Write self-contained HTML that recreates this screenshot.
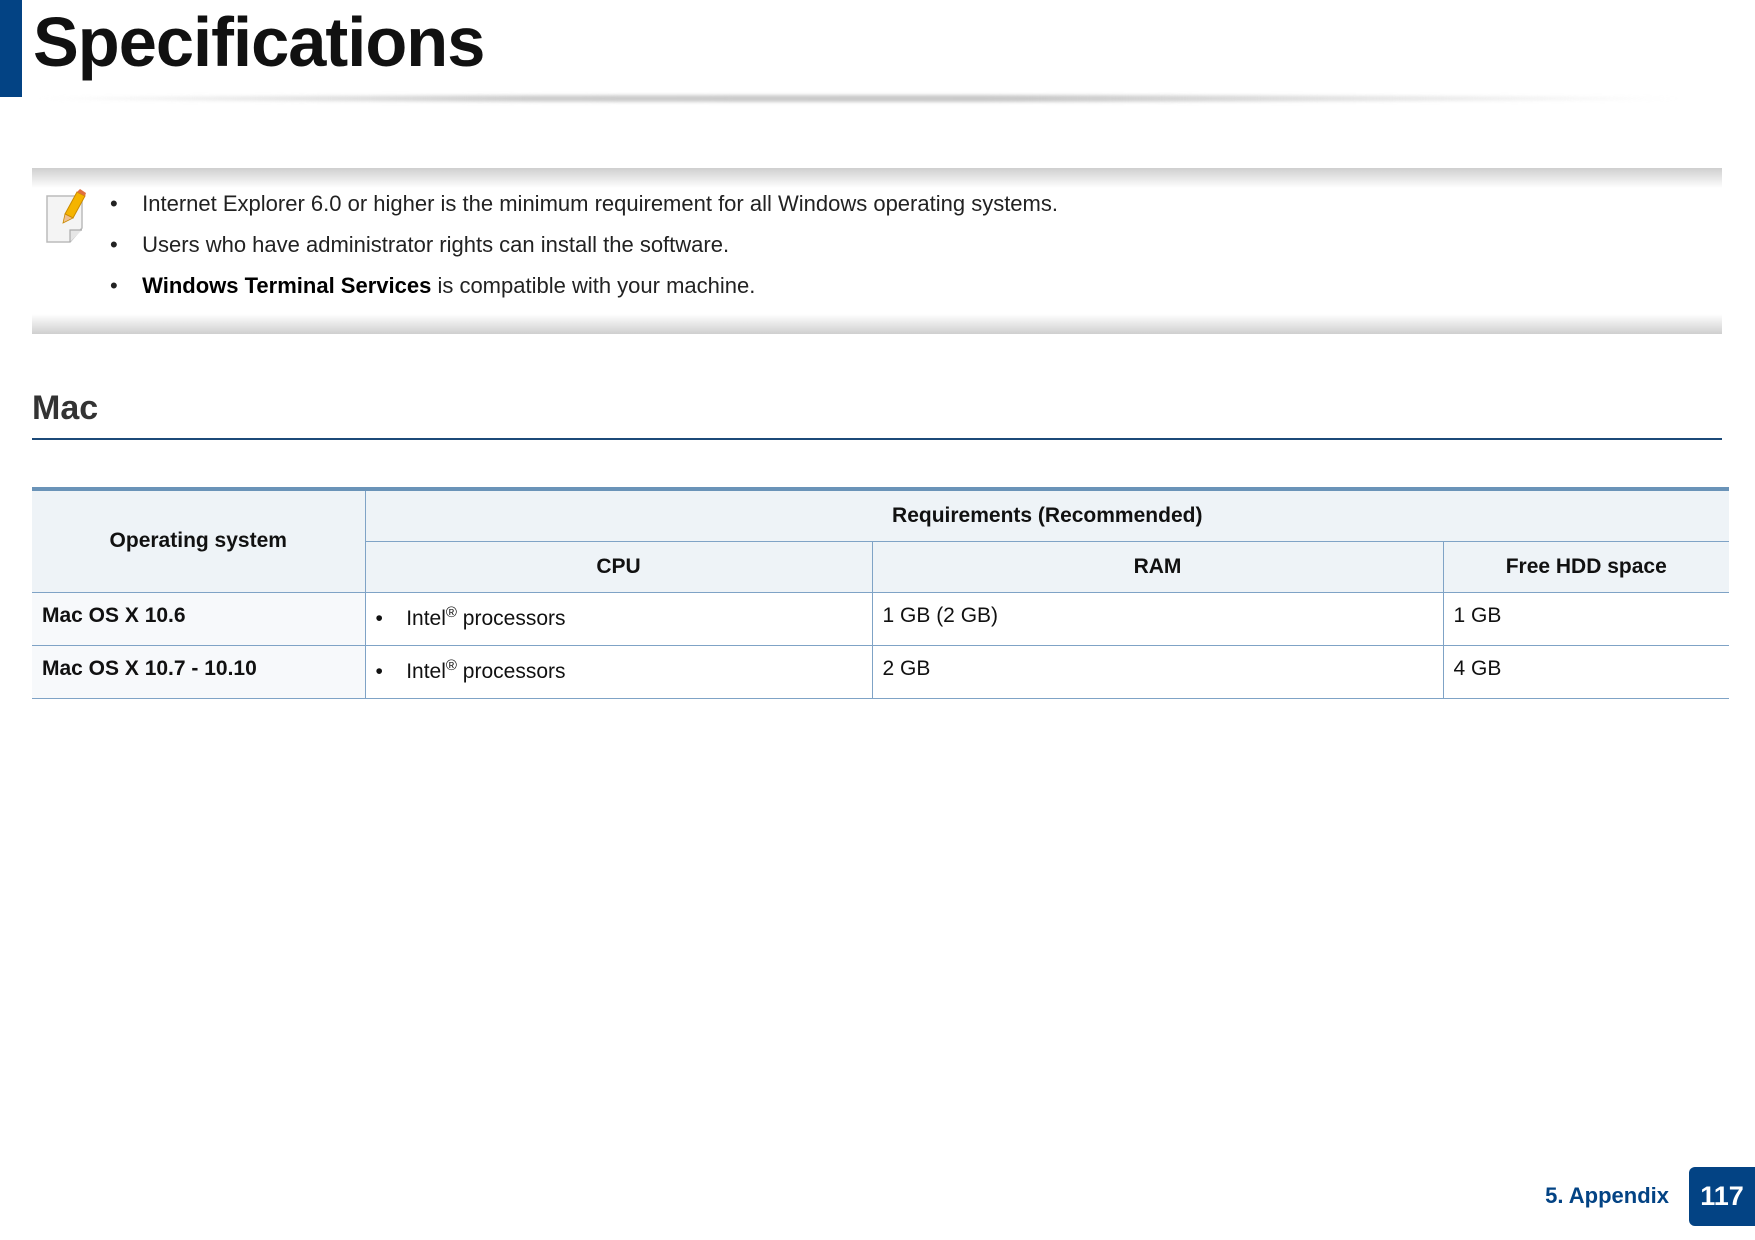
<!DOCTYPE html>
<html><head><meta charset="utf-8"><style>
*{margin:0;padding:0;box-sizing:border-box}
body{width:1755px;height:1240px;background:#fff;position:relative;overflow:hidden;font-family:"Liberation Sans",sans-serif;color:#111}
.a{position:absolute;white-space:nowrap}
.t{border-collapse:collapse;position:absolute;left:32px;top:487px;width:1697px;font-size:21px}
.t td{border:1px solid #7fa3c6;padding:0 10px}
.t tr:first-child td{border-top:4px solid #6a93b8}
.t td:first-child{border-left:none}
.t td:last-child{border-right:none}
.h{background:#eef3f7;font-weight:bold;text-align:center}
.b td{height:53px;vertical-align:top;padding-top:11px}
</style></head><body>
<div class="a" style="left:0;top:0;width:22px;height:97px;background:#034384"></div>
<div class="a" style="left:33px;top:2px;font-size:70px;font-weight:bold;letter-spacing:-1px;transform:scaleX(0.98);transform-origin:left">Specifications</div>
<div class="a" style="left:34px;top:95px;width:1650px;height:7px;background:linear-gradient(90deg,rgba(255,255,255,0),#ccc 30%,#c8c8c8 60%,rgba(255,255,255,0));filter:blur(1.5px);border-radius:50%"></div>

<div class="a" style="left:32px;top:168px;width:1690px;height:166px;background:linear-gradient(#cfcfcf,#fff 20px,#fff 146px,#cfcfcf)"></div>
<svg class="a" style="left:44px;top:188px" width="52" height="58" viewBox="0 0 52 58">
<path d="M3 8 H38 V40 L26 54 H3 Z" fill="#f4f4f4" stroke="#bbb" stroke-width="1.5"/>
<path d="M26 54 V42 H38" fill="#e6e6e6" stroke="#aaa" stroke-width="1.2"/>
<path d="M21 26 L33 4 L41 8 L29 30 Z" fill="#f5b400" stroke="#c98a00" stroke-width="1"/>
<path d="M21 26 L19 35 L29 30 Z" fill="#f0c090" stroke="#c98a00" stroke-width="0.8"/>
<path d="M33 4 L41 8 L42 5 L36 1Z" fill="#e07040"/>
</svg>
<div class="a" style="left:110px;top:183px;font-size:22px;line-height:41px;color:#222">
<div>•&nbsp;&nbsp;&nbsp;&nbsp;Internet Explorer 6.0 or higher is the minimum requirement for all Windows operating systems.</div>
<div>•&nbsp;&nbsp;&nbsp;&nbsp;Users who have administrator rights can install the software.</div>
<div>•&nbsp;&nbsp;&nbsp;&nbsp;<b style="color:#000">Windows Terminal Services</b> is compatible with your machine.</div>
</div>

<div class="a" style="left:32px;top:389px;font-size:34px;font-weight:bold;color:#333">Mac</div>
<div class="a" style="left:32px;top:438px;width:1690px;height:2px;background:#1c4a78"></div>

<table class="t">
<tr><td class="h" rowspan="2" style="width:333px">Operating system</td><td class="h" colspan="3" style="height:52px">Requirements (Recommended)</td></tr>
<tr><td class="h" style="width:507px;height:51px">CPU</td><td class="h" style="width:571px">RAM</td><td class="h">Free HDD space</td></tr>
<tr class="b"><td style="background:#f7f9fb;font-weight:bold">Mac OS X 10.6</td><td>•&nbsp;&nbsp;&nbsp;&nbsp;Intel<sup style="font-size:15px">®</sup> processors</td><td>1 GB (2 GB)</td><td>1 GB</td></tr>
<tr class="b"><td style="background:#f7f9fb;font-weight:bold">Mac OS X 10.7 - 10.10</td><td>•&nbsp;&nbsp;&nbsp;&nbsp;Intel<sup style="font-size:15px">®</sup> processors</td><td>2 GB</td><td>4 GB</td></tr>
</table>

<div class="a" style="right:86px;top:1183px;font-size:22px;font-weight:bold;color:#034384">5. Appendix</div>
<div class="a" style="left:1689px;top:1167px;width:66px;height:59px;background:#034384;border-radius:6px 0 0 6px;color:#fff;font-weight:bold;font-size:27px;text-align:center;line-height:58px">117</div>
</body></html>
